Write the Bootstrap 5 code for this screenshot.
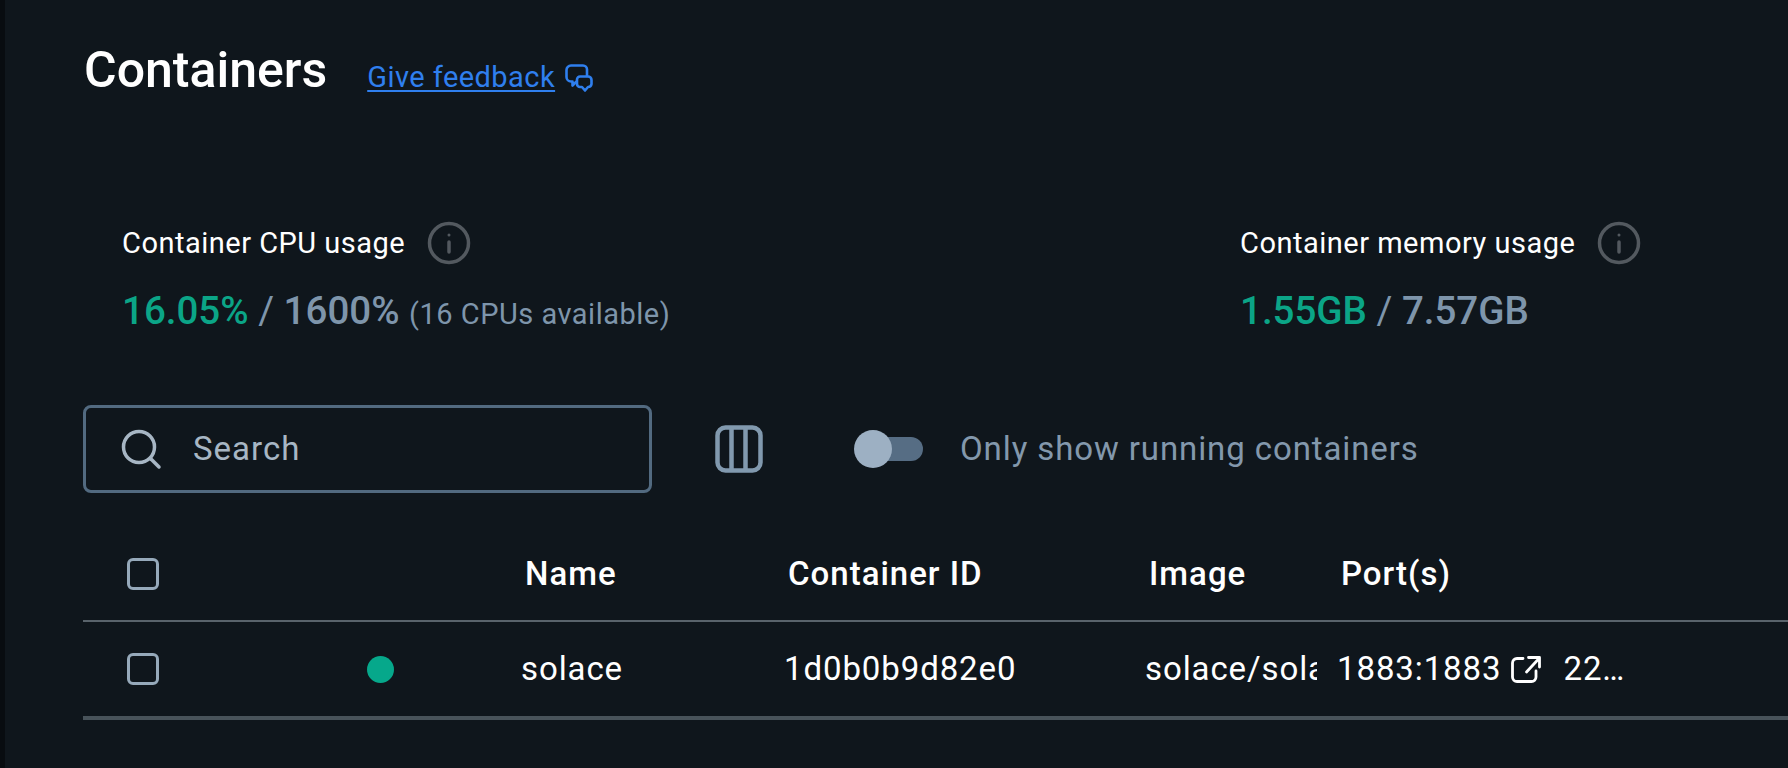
<!DOCTYPE html>
<html lang="en">
<head>
  <meta charset="UTF-8" />
  <title>Containers</title>
  <link href="https://cdn.jsdelivr.net/npm/bootstrap@5.3.0/dist/css/bootstrap.min.css" rel="stylesheet" />
  <style>
    html, body { height: 100%; overflow: hidden; }
    body { background: #0f161c; color: #fff; font-family: Roboto, "Liberation Sans", sans-serif; }
    .strip { width: 5px; background: #080c10; }
    .page { padding-left: 78px; min-width: 0; }

    .page-title { font-size: 50px; font-weight: 500; line-height: 54px; margin: 0 0 0 1px; }
    .head { padding-top: 43px; gap: 40px; }
    .feedback { color: #2f7fee; font-size: 29px; letter-spacing: .45px; line-height: 32px; text-underline-offset: 3px; text-decoration-thickness: 2px; }
    .feedback-icon { margin-left: -30px; margin-bottom: 5px; }

    .stats { padding: 124px 0 0 39px; }
    .stat-cpu { width: 1118px; }
    .stat-label { font-size: 29px; line-height: 36px; letter-spacing: .5px; gap: 22px; }
    .info { width: 44px; height: 44px; }
    .stat-value { font-size: 38.5px; font-weight: 500; line-height: 44px; color: #7e95ab; margin-top: 24px; }
    .used { color: #0ba587; }
    .slash { font-weight: 400; }
    .note { font-size: 29px; font-weight: 400; letter-spacing: .5px; }

    .tools { margin-top: 69px; }
    .search { width: 569px; height: 88px; border: 3px solid #526a80; border-radius: 8px; padding-left: 34px; gap: 31px; }
    .search input { background: transparent; border: 0; outline: 0; padding: 0; color: #fff; font-size: 33px; letter-spacing: 1px; width: 300px; }
    .search input::placeholder { color: #a7b6c4; opacity: 1; }
    .cols { margin-left: 63px; }
    .switch { width: 69px; height: 38px; margin-left: 91px; }
    .switch .track { position: absolute; left: 18px; right: 0; top: 7px; bottom: 7px; background: #566d84; border-radius: 12px; }
    .switch .knob { position: absolute; left: 0; top: 0; width: 38px; height: 38px; border-radius: 50%; background: #9db0c3; }
    .switch-label { font-size: 33px; letter-spacing: .9px; color: #8398ac; margin-left: 37px; }

    .tbl { table-layout: fixed; width: 100%; margin: 38px 0 0; --bs-table-bg: transparent; --bs-table-color: #fff; }
    .tbl th, .tbl td { padding: 0; vertical-align: middle; white-space: nowrap; overflow: hidden; }
    .tbl thead tr { height: 90px; }
    .tbl tbody tr { height: 97px; }
    .tbl thead th { font-size: 33px; font-weight: 500; letter-spacing: 1px; border-bottom: 2px solid #59636b; padding: 0 0 4px 4px; }
    .tbl tbody td { font-size: 33px; letter-spacing: .9px; border-bottom: 4px solid #48535a; }
    .tbl .first { padding-left: 44px; }
    .check { width: 32px; height: 32px; margin: 0; background-color: transparent; border: 3px solid #96a9ba; border-radius: 6px !important; display: block; }
    .dot { width: 27px; height: 27px; background: #06a88b; border-radius: 50%; display: block; }
    .image-clip { width: 172px; overflow: hidden; }
    .ext { margin: 0 22px 0 10px; vertical-align: -4px; }
  </style>
</head>
<body>
  <div class="d-flex h-100">
    <div class="strip flex-shrink-0"></div>
    <main class="page flex-grow-1">

      <div class="head d-flex align-items-baseline">
        <h1 class="page-title">Containers</h1>
        <a class="feedback" href="#">Give feedback</a>
        <svg class="feedback-icon align-self-end" width="28" height="28" viewBox="0 0 28 28" fill="none" stroke="#2f7fee" stroke-width="2.6" stroke-linecap="round" stroke-linejoin="round"><path d="M11 18l-3.5 3.5v-4H6A4.5 4.5 0 0 1 1.5 13V6A4.5 4.5 0 0 1 6 1.5h12A4 4 0 0 1 22 5.5V12"/><path d="M15 12.5h8a3.5 3.5 0 0 1 3.5 3.5v4a3.5 3.5 0 0 1-3.5 3l-3 3.5-3-3.5h-2a3 3 0 0 1-3-3v-4.5a3 3 0 0 1 3-3z"/></svg>
      </div>

      <div class="stats d-flex">
        <div class="stat-cpu">
          <div class="stat-label d-flex align-items-center">
            Container CPU usage
            <svg class="info" viewBox="0 0 44 44" fill="none" stroke="#53595f" stroke-width="3.5"><circle cx="22" cy="22" r="19.5"/><path d="M22 21v10" stroke-linecap="round"/><circle cx="22" cy="14" r="1.5" fill="#53595f" stroke="none"/></svg>
          </div>
          <div class="stat-value"><span class="used">16.05%</span> <span class="slash">/</span> 1600% <span class="note">(16 CPUs available)</span></div>
        </div>
        <div>
          <div class="stat-label d-flex align-items-center">
            Container memory usage
            <svg class="info" viewBox="0 0 44 44" fill="none" stroke="#53595f" stroke-width="3.5"><circle cx="22" cy="22" r="19.5"/><path d="M22 21v10" stroke-linecap="round"/><circle cx="22" cy="14" r="1.5" fill="#53595f" stroke="none"/></svg>
          </div>
          <div class="stat-value"><span class="used">1.55GB</span> <span class="slash">/</span> 7.57GB</div>
        </div>
      </div>

      <div class="tools d-flex align-items-center">
        <div class="search d-flex align-items-center">
          <svg width="42" height="42" viewBox="0 0 42 42" fill="none" stroke="#a7b6c4" stroke-width="3.5" stroke-linecap="round"><circle cx="19" cy="19" r="15.5"/><path d="M31 31l8 8"/></svg>
          <input type="text" placeholder="Search" />
        </div>
        <svg class="cols" width="48" height="48" viewBox="0 0 48 48" fill="none" stroke="#8199ae" stroke-width="4.5"><rect x="2.5" y="2.5" width="43" height="43" rx="8"/><path d="M16.5 3v42M30.5 3v42"/></svg>
        <div class="switch position-relative flex-shrink-0"><span class="track"></span><span class="knob"></span></div>
        <span class="switch-label">Only show running containers</span>
      </div>

      <table class="table tbl">
        <colgroup>
          <col style="width:284px" /><col style="width:154px" /><col style="width:263px" /><col style="width:361px" /><col style="width:192px" /><col />
        </colgroup>
        <thead>
          <tr>
            <th class="first"><input class="form-check-input check" type="checkbox" /></th>
            <th></th>
            <th>Name</th>
            <th>Container ID</th>
            <th>Image</th>
            <th>Port(s)</th>
          </tr>
        </thead>
        <tbody>
          <tr>
            <td class="first"><input class="form-check-input check" type="checkbox" /></td>
            <td><span class="dot"></span></td>
            <td>solace</td>
            <td>1d0b0b9d82e0</td>
            <td><div class="image-clip">solace/sola</div></td>
            <td>1883:1883<svg class="ext" width="30" height="30" viewBox="0 0 30 30" fill="none" stroke="#fff" stroke-width="2.8" stroke-linecap="round" stroke-linejoin="round"><path d="M12 4.5H6A4.5 4.5 0 0 0 1.5 9v14A4.5 4.5 0 0 0 6 27.5h14.5A4.5 4.5 0 0 0 25 23v-6"/><path d="M15.5 18L28 4.5M17.5 3.5h11V13"/></svg>22…</td>
          </tr>
        </tbody>
      </table>

    </main>
  </div>
</body>
</html>
